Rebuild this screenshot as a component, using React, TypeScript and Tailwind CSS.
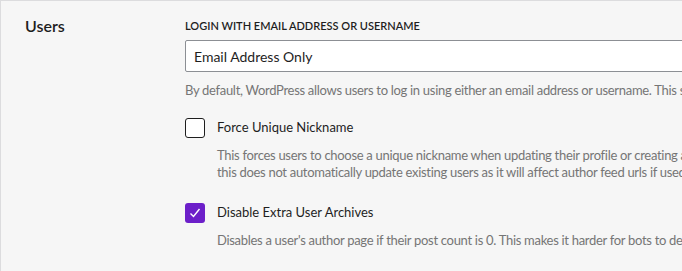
import React, { useState } from "react";

const font = { fontFamily: 'Lato, "Liberation Sans", sans-serif' };

function CheckRow({
  label,
  desc,
  checked,
  onToggle,
}: {
  label: string;
  desc: React.ReactNode;
  checked: boolean;
  onToggle: () => void;
}) {
  return (
    <div className="flex flex-col">
      <label className="flex items-center gap-3 cursor-pointer" onClick={onToggle}>
        {checked ? (
          <span className="w-5 h-5 rounded-[3px] bg-[#6c1fc9] flex items-center justify-center shrink-0">
            <svg width="14" height="14" viewBox="0 0 14 14" fill="none">
              <path d="M2.5 7.5 L5.5 10.5 L11.5 3" stroke="white" strokeWidth="1.4" />
            </svg>
          </span>
        ) : (
          <span className="w-5 h-5 rounded-[3px] border border-[#1e1e1e] bg-white shrink-0" />
        )}
        <span className="text-[13px] text-[#1e1e1e] whitespace-nowrap">{label}</span>
      </label>
      <p className="pl-8 mt-[9px] text-[13px] leading-[17px] tracking-[-0.3px] text-[#757575] whitespace-nowrap">
        {desc}
      </p>
    </div>
  );
}

export default function App() {
  const [unique, setUnique] = useState(false);
  const [archives, setArchives] = useState(true);

  return (
    <div
      className="w-[682px] h-[271px] overflow-hidden bg-[#f6f6f6] border-l border-t border-[#dcdcde] flex"
      style={font}
    >
      {/* Section title */}
      <div className="w-[184px] shrink-0 pl-6 pt-[13px]">
        <h2 className="text-[16px] font-semibold text-[#1e1e1e]">Users</h2>
      </div>

      {/* Settings */}
      <div className="flex-1 min-w-0 pt-[17px]">
        <div className="text-[11px] font-semibold uppercase text-[#1e1e1e] leading-[16px] whitespace-nowrap">
          Login with email address or username
        </div>
        <div className="mt-[6px] w-[560px] h-8 border border-[#8c8f94] rounded-[2px] bg-white flex items-center px-2 text-[14px] text-[#1e1e1e]">
          Email Address Only
        </div>
        <p className="mt-[9px] text-[13px] leading-[18px] tracking-[-0.3px] text-[#757575] whitespace-nowrap">
          By default, WordPress allows users to log in using either an email address or username. This setting
          restricts logins to email addresses only.
        </p>

        <div className="mt-[19px] flex flex-col gap-[22px]">
          <CheckRow
            label="Force Unique Nickname"
            checked={unique}
            onToggle={() => setUnique(!unique)}
            desc={
              <>
                This forces users to choose a unique nickname when updating their profile or creating a new account.
                <br />
                this does not automatically update existing users as it will affect author feed urls if used.
              </>
            }
          />
          <CheckRow
            label="Disable Extra User Archives"
            checked={archives}
            onToggle={() => setArchives(!archives)}
            desc="Disables a user's author page if their post count is 0. This makes it harder for bots to determine usernames."
          />
        </div>
      </div>
    </div>
  );
}
